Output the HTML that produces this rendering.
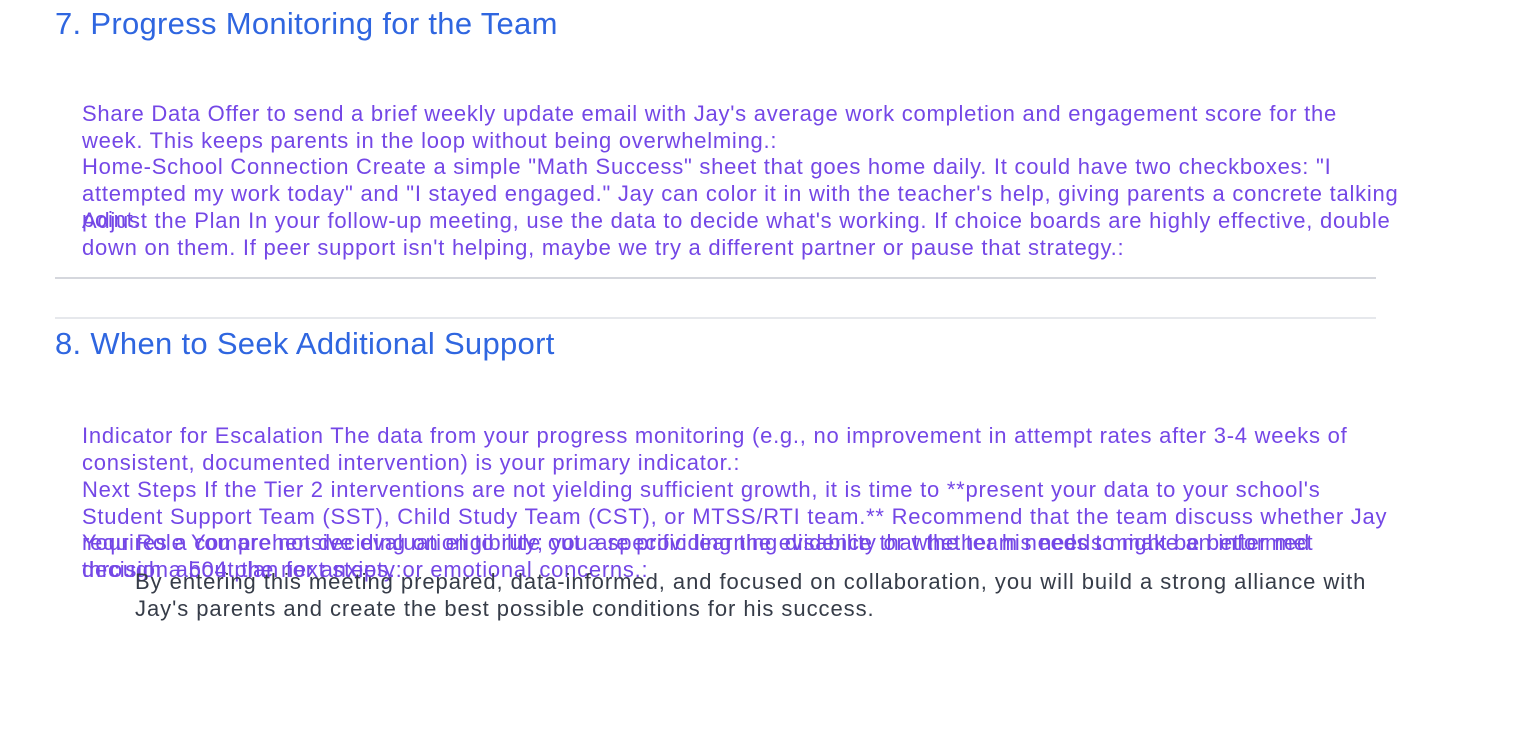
<!DOCTYPE html>
<html><head><meta charset="utf-8"><style>
body{margin:0;width:1526px;height:756px;background:#fff;position:relative;overflow:hidden;font-family:"Liberation Sans",Arial,sans-serif}
.h{position:absolute;left:55px;font-size:31px;letter-spacing:0.3px;color:#2f66e0;margin:0;font-weight:normal;white-space:nowrap}
.it{position:absolute;left:82px;width:1318px;height:53px;font-size:22px;letter-spacing:0.75px;line-height:26.7px;color:#7447e6}
.hr{position:absolute;left:55px;width:1321px;height:2px}
.p{position:absolute;left:135px;width:1260px;font-size:22px;letter-spacing:0.95px;line-height:26.7px;color:#363c48}
</style></head><body>
<div class="h" style="top:6px">7. Progress Monitoring for the Team</div>
<div class="it" style="top:101px">Share Data Offer to send a brief weekly update email with Jay's average work completion and engagement score for the week. This keeps parents in the loop without being overwhelming.:</div>
<div class="it" style="top:154px">Home-School Connection Create a simple "Math Success" sheet that goes home daily. It could have two checkboxes: "I attempted my work today" and "I stayed engaged." Jay can color it in with the teacher's help, giving parents a concrete talking point.:</div>
<div class="it" style="top:208px">Adjust the Plan In your follow-up meeting, use the data to decide what's working. If choice boards are highly effective, double down on them. If peer support isn't helping, maybe we try a different partner or pause that strategy.:</div>
<div class="hr" style="top:277px;background:#d5d7dd"></div>
<div class="hr" style="top:317px;background:#e6e8ec"></div>
<div class="h" style="top:326px">8. When to Seek Additional Support</div>
<div class="it" style="top:423px">Indicator for Escalation The data from your progress monitoring (e.g., no improvement in attempt rates after 3-4 weeks of consistent, documented intervention) is your primary indicator.:</div>
<div class="it" style="top:477px">Next Steps If the Tier 2 interventions are not yielding sufficient growth, it is time to **present your data to your school's Student Support Team (SST), Child Study Team (CST), or MTSS/RTI team.** Recommend that the team discuss whether Jay requires a comprehensive evaluation to rule out a specific learning disability or whether his needs might be better met through a 504 plan for anxiety or emotional concerns.:</div>
<div class="it" style="top:530px">Your Role You are not deciding on eligibility; you are providing the evidence that the team needs to make an informed decision about the next steps.:</div>
<div class="p" style="top:569px">By entering this meeting prepared, data-informed, and focused on collaboration, you will build a strong alliance with Jay's parents and create the best possible conditions for his success.</div>
</body></html>
